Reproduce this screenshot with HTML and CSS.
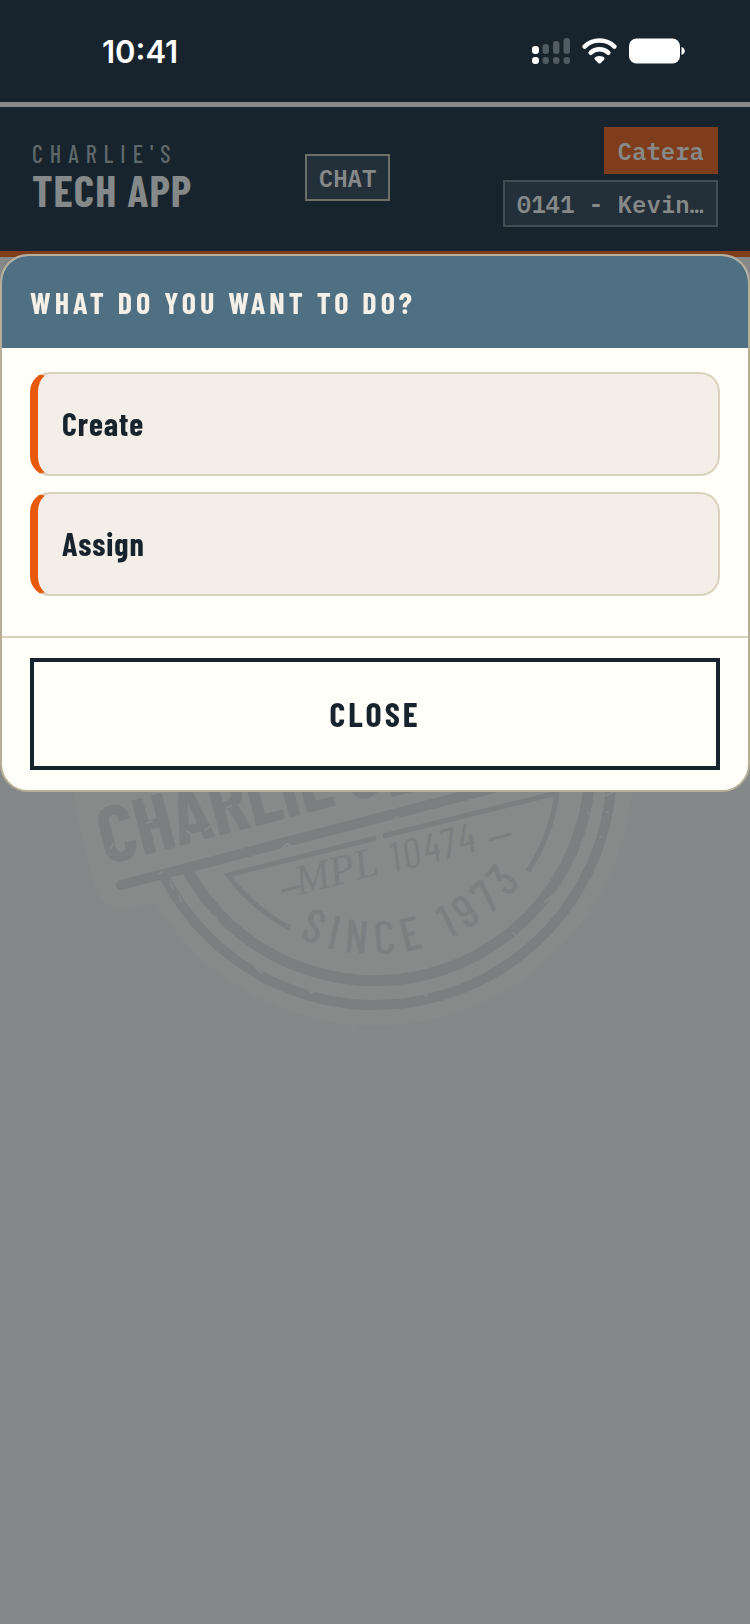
FILE: index.html
```
<!DOCTYPE html>
<html lang="en">
<head>
  <meta charset="UTF-8">
  <meta name="viewport" content="width=device-width, initial-scale=1">
  <title>Charlie's Tech App</title>
  <link rel="stylesheet" href="styles.css">
</head>
<body>
  <div class="status-bar">
    <span class="clock">10:41</span>
    <div class="status-icons">
      <svg width="38" height="26" viewBox="0 0 38 26">
        <g fill="#fff">
          <rect x="0" y="8" width="7" height="8" rx="3.2"/>
          <rect x="0" y="19" width="7" height="7" rx="3.2"/>
        </g>
        <g fill="#515c62">
          <rect x="10.500" y="6" width="6.500" height="10" rx="3.200"/>
          <rect x="21" y="3" width="6.500" height="13" rx="3.200"/>
          <rect x="31.500" y="0" width="6.500" height="16" rx="3.200"/>
          <rect x="10.500" y="19" width="6.500" height="7" rx="3.200"/>
          <rect x="21" y="19" width="6.500" height="7" rx="3.200"/>
          <rect x="31.500" y="19" width="6.500" height="7" rx="3.200"/>
        </g>
      </svg>
      <svg width="35" height="26" viewBox="0 0 35 26">
        <g fill="none" stroke="#fff" stroke-width="4.400" stroke-linecap="round">
          <path d="M2.600 8.600C10.500.5 24.500.5 32.400 8.600"/>
          <path d="M8.600 14.800c5-4.700 12.800-4.700 17.800 0"/>
        </g>
        <path fill="#fff" d="M17.500 18c2.200 0 4 .8 4.700 1.700.6.8.2 1.600-.4 2.200l-3 3c-.8.8-1.800.8-2.600 0l-3-3c-.6-.6-1-1.400-.4-2.200.7-.9 2.500-1.700 4.700-1.700z"/>
      </svg>
      <svg width="56" height="26" viewBox="0 0 56 26">
        <rect x="0" y="0.500" width="51" height="25" rx="7.500" fill="#fff"/>
        <path fill="#fff" d="M52.500 9c2 .6 3.300 2.200 3.300 4s-1.300 3.400-3.300 4z"/>
      </svg>
    </div>
  </div>

  <header class="app-header">
    <div class="brand">
      <div class="brand-small">CHARLIE'S</div>
      <div class="brand-title">TECH APP</div>
    </div>
    <button type="button" class="tag chat-btn">CHAT</button>
    <div class="user-tags">
      <button type="button" class="tag location-btn">Catera</button>
      <button type="button" class="tag user-btn">0141 - Kevin…</button>
    </div>
  </header>

  <main class="page">
    <svg class="watermark" viewBox="0 0 600 560" width="600" height="560">
      <defs>
        <path id="since-curve" d="M114 256A186 186 0 0 0 486 256"/>
      </defs>
      <!-- badge backing -->
      <g class="backing">
        <circle cx="300" cy="256" r="258"/>
        <path d="M-15 230L18 368Q26 402 56 396L300 334V150z"/>
      </g>
      <!-- rings, open on the upper left where the banner crosses -->
      <g class="ink-line">
        <path stroke-width="10" d="M87 360A237 237 0 0 0 537 256"/>
        <path stroke-width="11" d="M112 358A215 215 0 0 0 515 256"/>
        <path stroke-width="10" stroke-linecap="round" d="M46 373L480 260"/>
        <path stroke-width="5" d="M301 326L153 363A183 183 0 0 0 215 416"/>
        <path stroke-width="5" d="M308 324L482 281A183 183 0 0 1 453 359"/>
      </g>
      <g class="ink">
        <text class="banner-text" transform="translate(31 353) rotate(-14.500)">CHARLIE'S</text>
        <path d="M313 275l14-3 10 8-20 5z"/>
        <text class="license-text" transform="translate(224 383) rotate(-14.500)">MPL</text>
        <text class="license-number" transform="translate(318 361) rotate(-14.500)">10474</text>
        <text class="since-text"><textPath href="#since-curve" startOffset="214">SINCE 1973</textPath></text>
      </g>
      <path class="ink-line" stroke-width="3" d="M207 379l19-5M414 328l22-6"/>
      <!-- worn spots -->
      <g class="wear">
        <path d="M96 372l2 4M104 384l2 5M180 455l7 6M182 444l3 3M231 476l6 5 4-7M234 500l8 7M270 511l8 8 5-9M345 480l6 4 4-8M380 468l8-6 6 3 8-7M426 438l7-4 2 6M438 421l9 8M470 390l8-7 4 6M492 367l9-6M506 330l9 3M513 300l6 4M531 284l8-5M415 485l6 7M206 337l6-5 10 5M317 313l4-8 10 2M365 301l8-5 2 6"/>
        <path d="M84 362l4-2M36 336l2-4M72 311l5-2M94 305l6-3M112 319l7 5M130 318l6-4M152 296l4-2M240 491h1M290 486h1M315 486h1M460 445h1M487 410h1M525 325h1M532 300h1M140 405h1M160 432h1"/>
      </g>
    </svg>
  </main>

  <div class="overlay">
    <section class="modal" role="dialog" aria-labelledby="modal-title">
      <h2 class="modal-title" id="modal-title">WHAT DO YOU WANT TO DO?</h2>
      <div class="modal-body">
        <button type="button" class="option">Create</button>
        <button type="button" class="option">Assign</button>
      </div>
      <div class="modal-footer">
        <button type="button" class="close-btn">CLOSE</button>
      </div>
    </section>
  </div>
</body>
</html>
```
FILE: styles.css
```
* {
  margin: 0;
  padding: 0;
  box-sizing: border-box;
}

body {
  font-family: "Barlow Condensed", "Liberation Sans Narrow", "Liberation Sans", sans-serif;
  background: #848888;
  color: #17242d;
  min-height: 100vh;
  display: flex;
  flex-direction: column;
}

button {
  font-family: inherit;
  color: inherit;
  cursor: pointer;
}

.status-bar {
  height: 107px;
  padding: 0 65px 0 102px;
  background: #17242d;
  border-bottom: 5px solid #868889;
  display: flex;
  justify-content: space-between;
  align-items: center;
}

.clock {
  font-family: Inter, sans-serif;
  font-size: 31px;
  font-weight: 600;
  color: #fff;
}

.status-icons {
  display: flex;
  align-items: center;
  gap: 12px;
}

.app-header {
  height: 150px;
  padding: 20px 32px;
  background: #17242d;
  border-bottom: 6px solid #803d1c;
  display: flex;
  justify-content: space-between;
  align-items: flex-start;
}

.brand {
  padding-top: 13px;
}

.brand-small {
  font-size: 24px;
  line-height: 28px;
  font-weight: 500;
  letter-spacing: 7px;
  margin-right: -7px;
  color: #5f686b;
}

.brand-title {
  font-size: 44px;
  line-height: 44px;
  font-weight: bold;
  letter-spacing: 1px;
  color: #858989;
}

.tag {
  height: 47px;
  padding: 0 12px;
  border: 2px solid #434d54;
  background: #232f39;
  font-family: "IBM Plex Mono", "Liberation Mono", monospace;
  font-size: 24px;
  font-weight: 600;
  color: #858989;
}

.chat-btn {
  margin-top: 27px;
  border-color: #6d6f69;
}

.user-tags {
  display: flex;
  flex-direction: column;
  align-items: flex-end;
  gap: 6px;
}

.location-btn {
  background: #803d1c;
  border-color: #803d1c;
}

.page {
  flex: 1;
  padding-top: 255px;
  display: flex;
  justify-content: center;
  align-items: flex-start;
}

.watermark {
  overflow: visible;
}

.backing {
  fill: #868a88;
}

.ink {
  fill: #7b7f80;
}

.ink-line {
  fill: none;
  stroke: #7b7f80;
}

.wear {
  fill: none;
  stroke: #868a88;
  stroke-width: 2;
  stroke-linecap: round;
}

.banner-text {
  font-size: 80px;
  font-weight: bold;
}

.license-text {
  font-family: "Monotype Corsiva", "Z003", "URW Chancery L", "Liberation Serif", serif;
  font-size: 42px;
  font-style: italic;
}

.license-number {
  font-size: 42px;
  font-style: italic;
  letter-spacing: 3px;
}

.since-text {
  font-size: 47px;
  font-weight: 500;
  letter-spacing: 8px;
}

.overlay {
  position: fixed;
  inset: 0;
  padding-top: 254px;
}

.modal {
  background: #fffef9;
  border: 2px solid #b7ae98;
  border-radius: 28px;
  overflow: hidden;
}

.modal-title {
  padding: 28px;
  background: #4f6f82;
  color: #f4efe7;
  font-size: 30px;
  line-height: 36px;
  font-weight: bold;
  letter-spacing: 4px;
}

.modal-body {
  padding: 24px 28px 40px;
  display: flex;
  flex-direction: column;
  gap: 16px;
}

.option {
  height: 104px;
  padding: 0 24px 2px;
  background: #f3eee7;
  border: 2px solid #d9d1be;
  border-left: 8px solid #e8590c;
  border-radius: 20px;
  font-size: 32px;
  font-weight: bold;
  letter-spacing: 1px;
  text-align: left;
}

.modal-footer {
  padding: 20px 28px;
  border-top: 2px solid #d9d1be;
}

.close-btn {
  width: 100%;
  height: 112px;
  padding-bottom: 2px;
  background: transparent;
  border: 4px solid #17242d;
  font-size: 34px;
  font-weight: bold;
  letter-spacing: 3px;
}
```
